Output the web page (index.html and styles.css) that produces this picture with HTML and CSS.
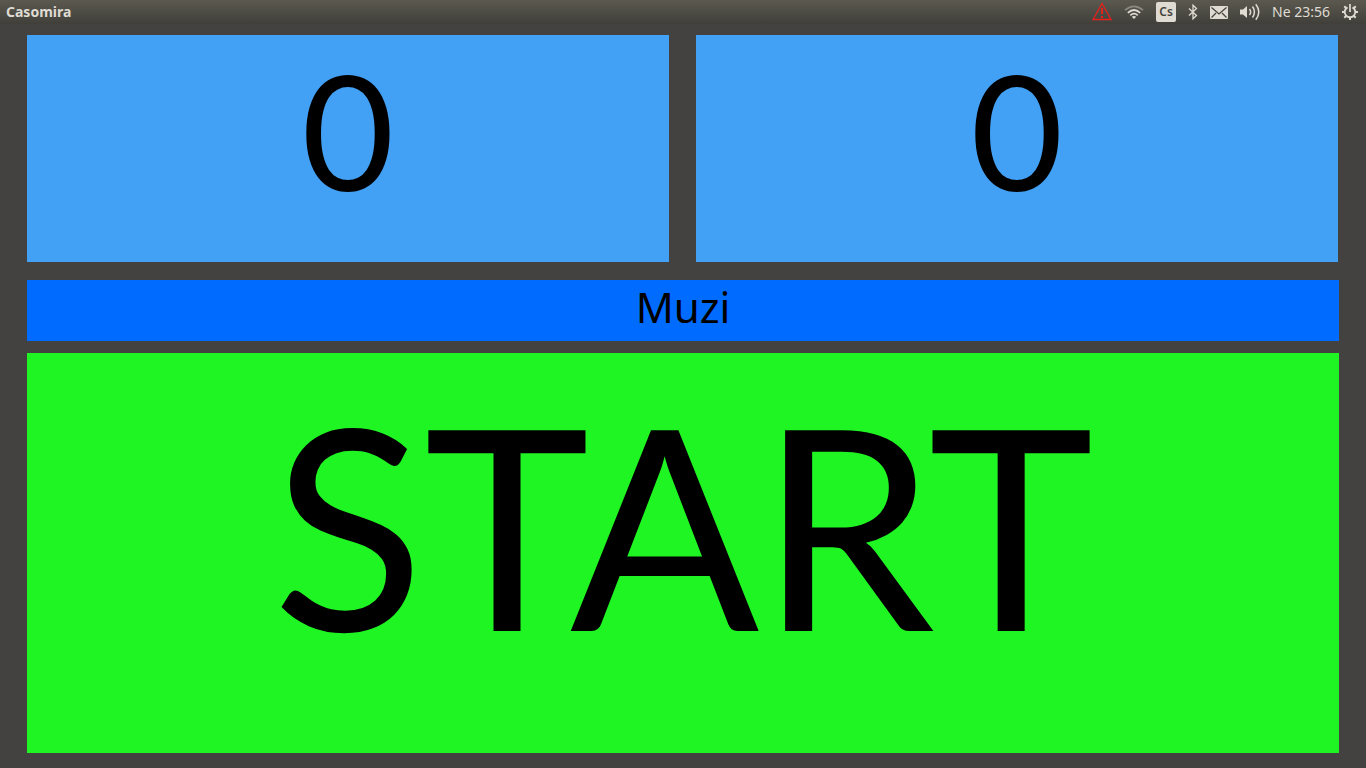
FILE: index.html
```html
<!DOCTYPE html>
<html lang="cs">
<head>
<meta charset="utf-8">
<title>Casomira</title>
<meta name="viewport" content="width=device-width, initial-scale=1">
<link rel="stylesheet" href="styles.css">
</head>
<body>
<header class="panel">
  <h1 class="panel-title">Casomira</h1>
  <div class="indicators">
    <button class="indicator" type="button" aria-label="Warning">
      <svg width="20" height="20" viewBox="0 0 20 20" fill="none" stroke="#e8201c"><path d="M10 1.500 19 17.500H1Z" stroke-width="1.300"/><path d="M10 6v6M10 14v2" stroke-width="2"/></svg>
    </button>
    <button class="indicator" type="button" aria-label="Network">
      <svg width="20" height="16" viewBox="0 0 20 16" fill="none" stroke="#dfdbd2" stroke-width="1.700"><path d="M1 6.200Q10-1.600 19 6.200" stroke="#8b8880"/><path d="M3.800 8.800Q10 3.200 16.200 8.800M6.300 11.300Q10 8 13.700 11.300"/><path d="M7.800 12.800Q10 11 12.200 12.800L10 15Z" fill="#dfdbd2" stroke="none"/></svg>
    </button>
    <button class="indicator keyboard" type="button">Cs</button>
    <button class="indicator" type="button" aria-label="Bluetooth">
      <svg width="10" height="16" viewBox="0 0 10 16" fill="none" stroke="#dfdbd2" stroke-width="1.300"><path d="M1 4.500 8.500 11.500 5 14.800V1.200L8.500 4.500 1 11.500"/></svg>
    </button>
    <button class="indicator" type="button" aria-label="Messages">
      <svg width="18" height="13" viewBox="0 0 18 13"><rect width="18" height="13" rx="1" fill="#dfdbd2"/><path d="M1.500 1.500 9 8l7.500-6.500M1.500 11.500 6 7M16.500 11.500 12 7" fill="none" stroke="#45443d" stroke-width="1.300"/></svg>
    </button>
    <button class="indicator" type="button" aria-label="Sound">
      <svg width="20" height="18" viewBox="0 0 20 18" fill="none" stroke="#dfdbd2" stroke-width="1.500"><path d="M0 6.500h3L7 3v12L3 11.500H0Z" fill="#dfdbd2" stroke="none"/><path d="M9.500 6Q11.800 9 9.500 12M12.500 3.500Q16.300 9 12.500 14.500M15.800 1.300Q21.800 9 15.800 16.700"/></svg>
    </button>
    <button class="indicator clock" type="button">Ne 23:56</button>
    <button class="indicator" type="button" aria-label="System">
      <svg width="16" height="16" viewBox="0 0 16 16" fill="none" stroke="#dfdbd2"><path d="M5.500 3.300A5.300 5.300 0 1 0 10.500 3.300" stroke-width="1.900"/><path d="M8 0v8" stroke-width="1.700"/><path d="M2.300 2.300l2 2M13.700 2.300l-2 2M0 8h3M13 8h3M2.300 13.700l2-2M13.700 13.700l-2-2M8 13v3" stroke-width="2"/></svg>
    </button>
  </div>
</header>
<main class="board">
  <div class="scores">
    <output class="score" aria-label="Left time">0</output>
    <output class="score" aria-label="Right time">0</output>
  </div>
  <button class="category" type="button">Muzi</button>
  <button class="start" type="button">START</button>
</main>
</body>
</html>
```
FILE: styles.css
```css
* { box-sizing: border-box; }

body {
  display: flex;
  flex-direction: column;
  min-height: 100vh;
  margin: 0;
  background: #444240;
  color: #000;
  font-family: Lato, Carlito, sans-serif;
}

button {
  border: 0;
  padding: 0;
  color: inherit;
  font: inherit;
  cursor: pointer;
}

.panel {
  display: flex;
  align-items: center;
  justify-content: space-between;
  height: 24px;
  padding: 0 8px 0 6px;
  background: linear-gradient(#5b594f, #403f3a);
  color: #dfdbd2;
  font-family: "Noto Sans", sans-serif;
  font-size: 14px;
  line-height: 24px;
}

.panel-title {
  margin: 0;
  font-size: 14px;
  font-weight: 700;
}

.indicators {
  display: flex;
  align-items: center;
  gap: 12px;
}

.indicator {
  display: flex;
  align-items: center;
  background: none;
}

.keyboard {
  justify-content: center;
  width: 20px;
  height: 20px;
  border-radius: 2px;
  background: #dfdbd2;
  color: #45443d;
  font-size: 12px;
  font-weight: 600;
}

.board {
  display: grid;
  flex: 1;
  grid-template-rows: 239fr 79fr 400fr;
  padding: 11px 27px 15px;
}

.scores {
  display: grid;
  grid-template-columns: 1fr 1fr;
  gap: 27px;
  padding: 0 1px 12px 0;
}

.score {
  display: flex;
  align-items: center;
  justify-content: center;
  padding-bottom: 40px;
  background: #43a1f5;
  font-size: 160px;
  line-height: 1;
}

.category {
  margin: 6px 0 12px;
  padding-bottom: 8px;
  background: #006cff;
  font-family: "Noto Sans", sans-serif;
  font-size: 42px;
  line-height: 1;
}

.start {
  padding-bottom: 60px;
  background: #20f524;
  font-size: 280px;
  line-height: 1;
}
```
